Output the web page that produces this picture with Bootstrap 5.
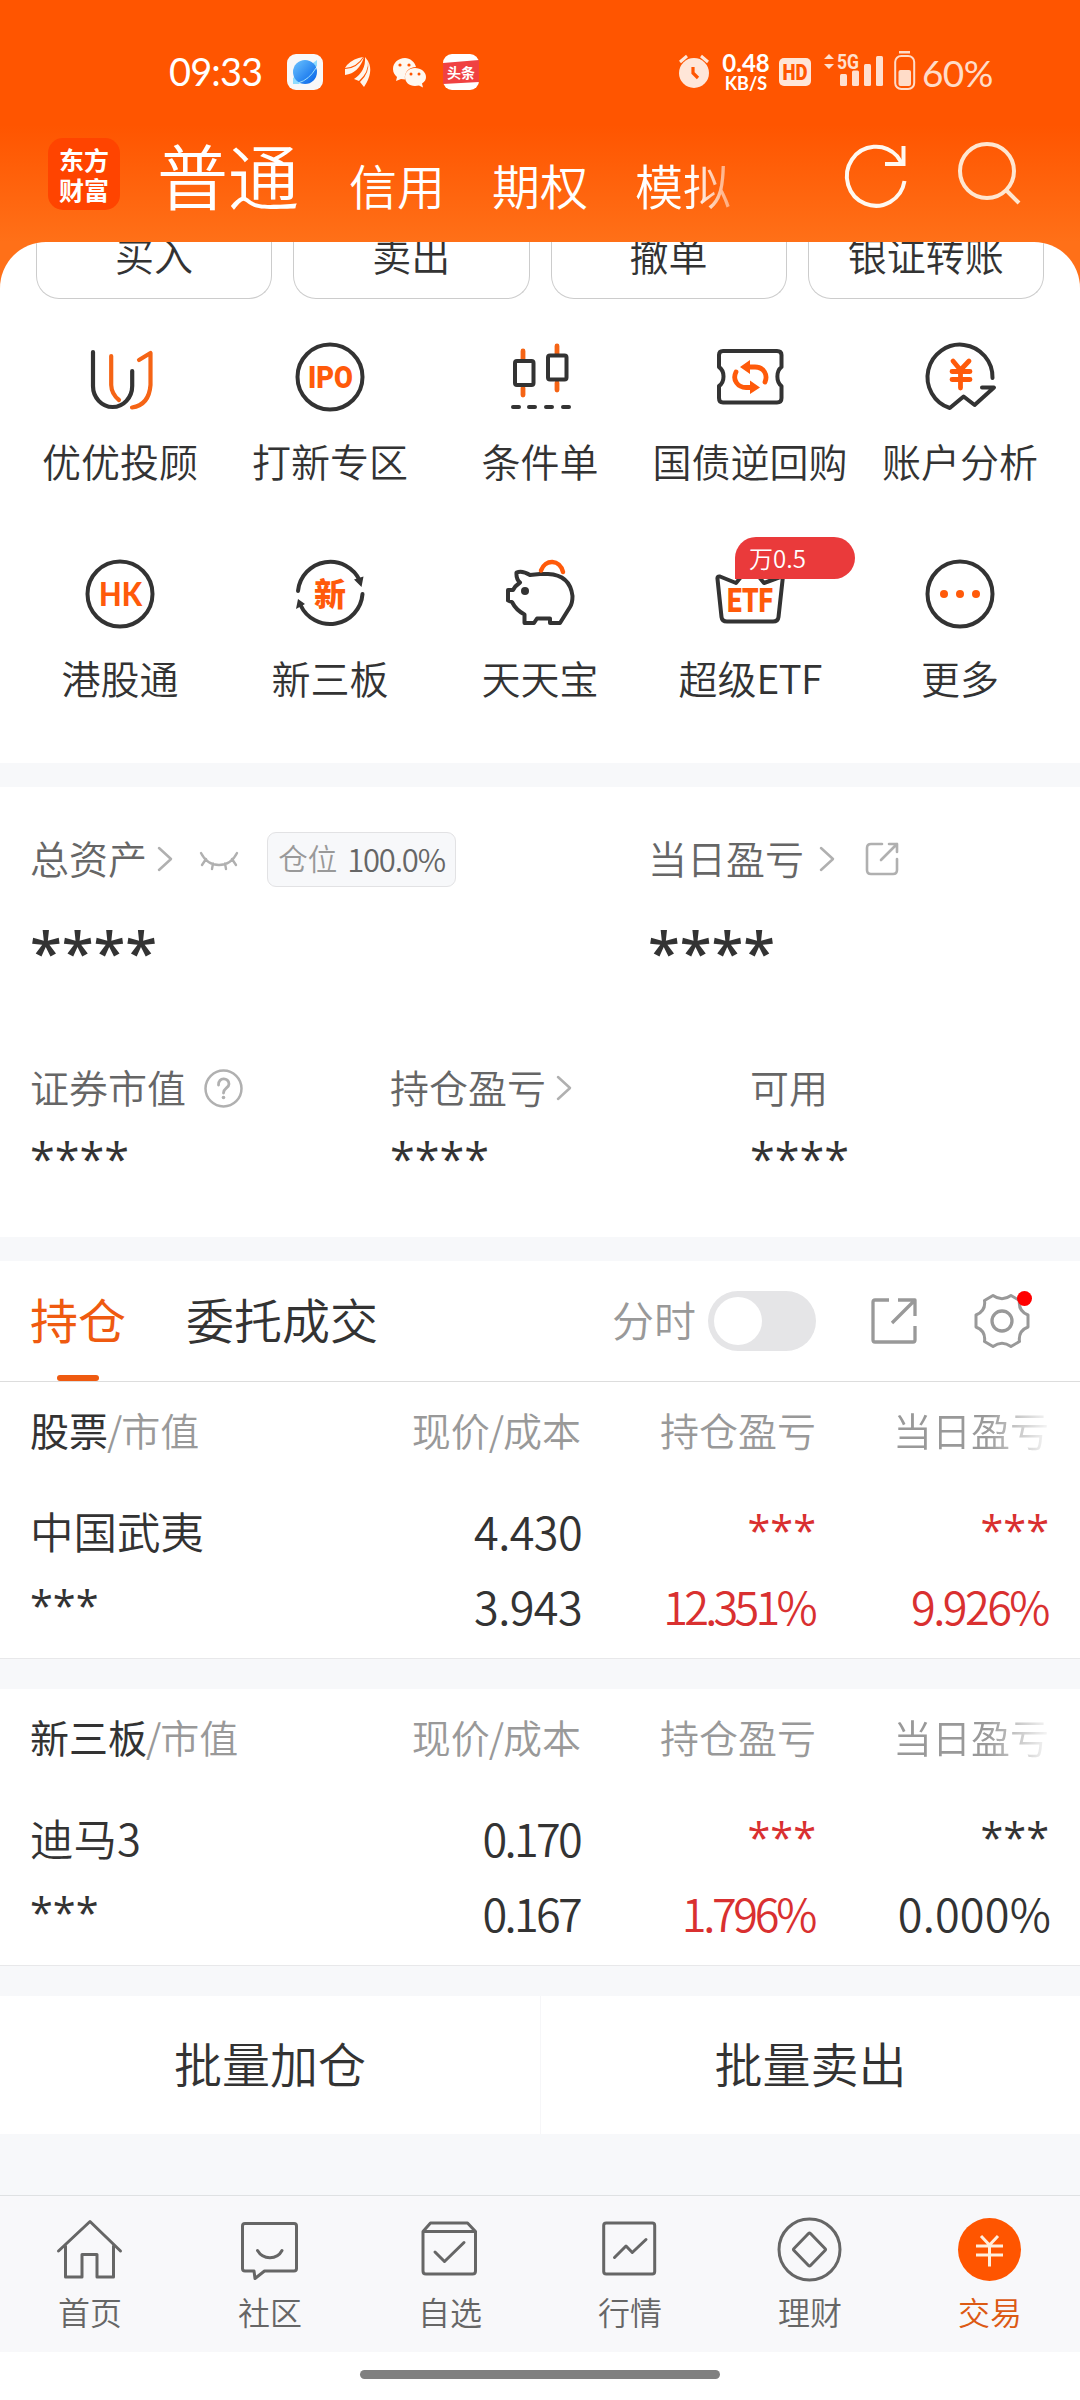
<!DOCTYPE html>
<html lang="zh-CN">
<head>
<meta charset="utf-8">
<meta name="viewport" content="width=device-width, initial-scale=1">
<title>东方财富 交易</title>
<link href="https://cdn.jsdelivr.net/npm/bootstrap@5.3.0/dist/css/bootstrap.min.css" rel="stylesheet">
<style>
:root{--ink:#333;--sub:#666;--mute:#999;--band:#f7f8fa;--brand:#ff5500;--up:#d93030}
body{width:1080px;height:2400px;overflow:hidden;margin:0;background:#fff;color:var(--ink);font-family:Lato,"Noto Sans CJK SC",sans-serif;font-weight:350;font-size:39px;line-height:1;white-space:nowrap}
svg{display:block;flex:none;overflow:visible}
.latin{font-family:"Noto Sans CJK SC",sans-serif;line-height:0}
.ln{fill:none;stroke:currentColor;stroke-linecap:round;stroke-linejoin:round}
.hero{height:242px;color:#fff}
.hero-wrap{background:linear-gradient(#ff5500 0,#ff5500 125px,#ff7018 242px,#ff7018 100%)}
.statusbar{height:94px;padding:50px 0 0 169px;font-family:Lato,sans-serif}
.clock{font-size:38px;font-weight:400;width:118px;line-height:43px;letter-spacing:-.9px}
.speed{width:52px;margin:0 7px 0 10px;text-align:center;font-weight:700}
.titlebar{height:148px;padding:0 0 0 48px}
.logo{width:72px;height:72px;border-radius:15px;background:#ff4400;margin-top:44px;font:700 25px/30px "Noto Sans CJK SC",sans-serif;padding-top:6px}
.t-main{font-size:71px;line-height:70px;margin:48px 0 0 37px;width:192px}
.t-alt{font-size:48px;line-height:48px;margin-top:69px;width:143px}
.fade-title{width:113px;-webkit-mask-image:linear-gradient(90deg,#000 50%,rgba(0,0,0,.35) 90%);mask-image:linear-gradient(90deg,#000 50%,rgba(0,0,0,.35) 90%)}
.panel{border-radius:46px 46px 0 0;height:521px;overflow:hidden}
.quick{gap:21px;padding:0 36px;height:57px}
.quick>div{flex:1;border:1px solid #ccc;border-top:0;border-radius:0 0 23px 23px;line-height:39px;height:57px}
.quick span{display:block;margin-top:-5px}
.apps{padding:36px 15px 0}
.app{width:210px;height:217px}
.app-name{margin-top:27px;line-height:40px}
.app svg{color:#333}
.promo{left:90px;top:-15px;width:120px;height:42px;border-radius:21px 21px 21px 0;background:#ea3a3b;color:#fff;font-family:"Noto Sans CJK SC",sans-serif;font-size:24px;line-height:41px;padding-left:14px}
.band{height:24px;background:var(--band)}
.assets{height:450px;padding:0 30px;color:var(--sub)}
.arow{height:54px}
.pill{width:189px;height:55px;border:1px solid #e2e2e4;border-radius:9px;background:var(--band);font-size:29.500px;margin-left:29px}
.pill-num{margin-left:10px;font-family:"Noto Sans CJK SC",sans-serif;font-size:31px;letter-spacing:-1.2px;margin-bottom:2px}
.stars{font-family:"Open Sans",sans-serif;color:var(--ink);line-height:1}
.s-big{font-size:58px;font-weight:600;height:58px;margin-top:37px}
.s-mid{font-size:45px;font-weight:500;height:46px;margin-top:21px}
.s-sm{font-family:"Open Sans",sans-serif;font-size:41.5px;font-weight:400;padding-bottom:4px}
.gray{color:#b0b0b0}
.tabs{height:121px;border-bottom:1px solid #ddd;padding-left:30px;font-size:48px}
.tab-on{color:#ef5a10;font-weight:400}
.tab-on i{left:27px;bottom:0;width:42px;height:6px;border-radius:3px;background:#ef5a10}
.tab-off{margin-left:60px}
.toggle{width:108px;height:60px;border-radius:30px;background:#e5e5e7;padding:6px}
.toggle i{display:block;width:48px;height:48px;border-radius:50%;background:#fff}
.hold{height:277px;padding:0 31px 0 30px;border-bottom:1px solid #e8e8ea}
.hgrid{display:grid;grid-template-columns:301px 250px 235px 233px;align-items:center;text-align:right}
.hgrid>:first-child{text-align:left}
.hhead{height:101px;color:var(--mute);padding-bottom:3px}
.hhead b{font-weight:400;color:var(--ink)}
.slash{margin:0 -1px}
.num{font-family:"Noto Sans CJK SC",sans-serif;font-size:45px;letter-spacing:-.6px;margin-right:-1px;padding-bottom:5px}
.narrow{letter-spacing:-2.7px;margin-right:1px}
.p1{letter-spacing:-3.7px;margin-right:2px}
.p2{letter-spacing:-2.5px;margin-right:1px}
.p3{letter-spacing:-3.3px;margin-right:2px}
.p0{letter-spacing:.2px;margin-right:-2px}
.up{color:var(--up)}
.fadeout{-webkit-mask-image:linear-gradient(90deg,#000 60%,rgba(0,0,0,.12) 98%);mask-image:linear-gradient(90deg,#000 60%,rgba(0,0,0,.12) 98%)}
.batch{height:138px;font-size:48px}
.batch>div+div{border-left:1px solid #f6f6f8}
.bottomnav{height:157px;background:#f8f8fa;border-top:1px solid #dfe1e3;color:var(--sub);font-size:32px}
.bottomnav>div{width:180px;padding-top:18px}
.bottomnav span{margin-top:9px;line-height:36px}
.homebar{width:360px;height:9px;border-radius:5px;background:#808080;margin:18px auto 0}
</style>
</head>
<body>
<div class="hero-wrap">
<header class="hero">
  <div class="statusbar d-flex align-items-start">
    <span class="clock">09:33</span>
    <svg width="36" height="36" viewBox="0 0 36 36" style="margin-top:4px"><defs><linearGradient id="sea" x1="0" y1="0" x2="1" y2="1"><stop offset="0" stop-color="#6cc4ff"/><stop offset="1" stop-color="#0060e8"/></linearGradient></defs><rect width="36" height="36" rx="9" fill="#f8f8f8"/><path d="M30 6V12L12 30H6V24z" fill="#8edcff"/><circle cx="18" cy="18" r="12" fill="url(#sea)"/><path d="M29 14Q22 26 11 29" stroke="#9be0ff" stroke-width="1" fill="none"/></svg>
    <svg width="26" height="32" viewBox="0 0 26 32" style="margin:6px 0 0 22px" fill="#fff4ea"><path d="M0 12Q12 11 18 1Q9 2 2 9zM0 13V19Q14 17 19 1Q12 13 0 13zM9 23Q21 15 20 1L23 5Q24 16 14 25zM15 26Q25 17 23 5Q29 16 19 31z"/></svg>
    <svg width="33" height="29" viewBox="0 0 33 29" style="margin:8px 0 0 22px" fill="#fff8f0"><path d="M12 0C5 0 0 5 0 11c0 4 2 6 4 8l-1 4 5-2 4 .6C11 14 16 9 23 9 22 4 17 0 12 0z"/><path d="M22 10c-6 0-10 4-10 9s4 9 10 9l4-.6 4 2-1-4c3-2 4-4 4-6.500C33 14 28 10 22 10z"/><g fill="#ff5500"><circle cx="7" cy="7" r="1.600"/><circle cx="16" cy="7" r="1.600"/><circle cx="18" cy="16" r="1.500"/><circle cx="26" cy="16" r="1.500"/></g></svg>
    <svg width="36" height="36" viewBox="0 0 36 36" style="margin:4px 0 0 17px"><rect width="36" height="36" rx="9" fill="#fff"/><path d="M0 9L36 6V28L0 30z" fill="#f04142"/><text x="18" y="24" font-size="14" font-weight="700" font-family="Noto Sans CJK SC" fill="#fff" text-anchor="middle">头条</text></svg>
    <svg width="32" height="36" viewBox="0 0 32 36" style="margin:3px 0 0 199px" fill="#ffe6d8"><circle cx="16" cy="20" r="15"/><path d="M2 9L9 3M23 3L30 9" stroke="#ffe6d8" stroke-width="3"/><path d="M15 14V20L20 25" fill="none" stroke="#ff5500" stroke-width="3.200"/></svg>
    <div class="speed"><div style="font-size:24px;line-height:26px">0.48</div><div style="font-size:18px;line-height:15px">KB/S</div></div>
    <svg width="33" height="28" viewBox="0 0 33 28" style="margin-top:8px"><rect width="32" height="28" rx="5" fill="#ffe6d8"/><text x="3.500" y="22" font-family="Roboto" font-size="22" font-weight="900" fill="#ff5500" textLength="25" lengthAdjust="spacingAndGlyphs">HD</text></svg>
    <svg width="60" height="36" viewBox="0 0 60 36" style="margin:2px 0 0 12px" fill="#ffe0cf"><path d="M0 7L5 2L10 7zM0 12L5 17L10 12z"/><text x="13" y="17" font-size="20" font-weight="700" font-family="Roboto" textLength="22" lengthAdjust="spacingAndGlyphs">5G</text><rect x="16" y="22" width="7" height="12" rx="1.500"/><rect x="28" y="18.500" width="7" height="15.500" rx="1.500"/><rect x="40" y="12" width="7" height="22" rx="1.500"/><rect x="52" y="4" width="7" height="30" rx="1.500"/></svg>
    <svg width="22" height="40" viewBox="0 0 22 40" style="margin:1px 0 0 10px" fill="#ffdcc8"><rect x="5" width="11" height="2.500"/><rect x="1.200" y="5" width="19" height="33" rx="6" fill="none" stroke="#ffdcc8" stroke-width="2"/><rect x="4.500" y="19" width="12.500" height="16" rx="2"/></svg>
    <span style="font-size:37px;line-height:46px;margin-left:6px;font-weight:400;color:#ffdcc8;letter-spacing:-.6px">60%</span>
  </div>
  <div class="titlebar d-flex">
    <div class="logo text-center">东方<br>财富</div>
    <span class="t-main">普通</span><span class="t-alt">信用</span><span class="t-alt">期权</span><span class="t-alt fade-title">模拟</span>
    <svg width="64" height="66" viewBox="843 142 64 66" style="margin:48px 0 0 95px" fill="none" stroke="#fff8f0" stroke-width="4"><path d="M904.500 181A29 29.500 0 1 1 897 156L903 165"/><path d="M903.500 146V164H885"/></svg>
    <svg width="64" height="66" viewBox="957 142 64 66" style="margin:48px 0 0 50px" fill="none" stroke="#ffe6d0" stroke-width="4"><circle cx="987" cy="171" r="27"/><path d="M1006 190L1019 203"/></svg>
  </div>
</header>
<main class="panel bg-white">
  <div class="quick d-flex text-center">
    <div><span>买入</span></div><div><span>卖出</span></div><div><span>撤单</span></div><div><span>银证转账</span></div>
  </div>
  <div class="apps d-flex flex-wrap">
    <div class="app d-flex flex-column align-items-center pt-1">
      <svg width="76" height="76" viewBox="0 0 76 76"><g class="ln" stroke-width="4.200"><path d="M11 13V47a19.600 21 0 0 0 39.200 0V32"/><path stroke="#f56415" d="M29.200 17V46Q29.500 55 37 61M57 21L68.500 14V46Q67 66 50 68.500"/></g></svg>
      <span class="app-name">优优投顾</span></div>
    <div class="app d-flex flex-column align-items-center pt-1">
      <svg width="76" height="76" viewBox="0 0 76 76"><circle class="ln" stroke-width="4" cx="38" cy="38" r="32.500"/><text x="16" y="49" font-family="Roboto" font-size="32" font-weight="900" fill="#ff5a0a" textLength="45" lengthAdjust="spacingAndGlyphs">IPO</text></svg>
      <span class="app-name">打新专区</span></div>
    <div class="app d-flex flex-column align-items-center pt-1">
      <svg width="76" height="76" viewBox="0 0 76 76"><g class="ln" stroke-width="4"><path stroke="#f56415" stroke-width="4.800" d="M21 12V21M21 49V56M55 7V15M55 44V51"/><rect x="13" y="22" width="18.500" height="24" rx="2"/><rect x="46" y="16.500" width="18.500" height="24" rx="2"/><path d="M11 68H17M27 68H33M44 68H50M61 68H67"/></g></svg>
      <span class="app-name">条件单</span></div>
    <div class="app d-flex flex-column align-items-center pt-1">
      <svg width="76" height="76" viewBox="0 0 76 76"><path class="ln" stroke-width="4" d="M11 12H65Q69.500 12 69.500 16V28C64 32 64 43 69.500 47V59Q69.500 63.500 65 63.500H11Q7 63.500 7 59V47C13 43 13 32 7 28V16Q7 12 11 12z"/><g fill="none" stroke="#ff5a0a" stroke-width="4.800" stroke-linecap="round"><path d="M37 28H43C52 28 56 36 53 43M24 33C20 41 26 48.500 34 48.500H39"/></g><path fill="#ff5a0a" d="M28 28L38 21V35zM48 48.500L38 41.500V55z"/></svg>
      <span class="app-name">国债逆回购</span></div>
    <div class="app d-flex flex-column align-items-center pt-1">
      <svg width="76" height="76" viewBox="0 0 76 76"><path class="ln" stroke-width="4" d="M70.500 39A32.500 32.500 0 1 0 27.800 69L41.600 57.500L52.600 66L72 48.500H60"/><path class="ln" style="stroke:#ff5a0a" stroke-width="4.800" d="M31 22L38.500 31L47 22M38.500 31V49M30 32.500H48M30 40.500H48"/></svg>
      <span class="app-name">账户分析</span></div>
    <div class="app d-flex flex-column align-items-center pt-1">
      <svg width="76" height="76" viewBox="0 0 76 76"><circle class="ln" stroke-width="4" cx="38" cy="38" r="32.500"/><text x="17" y="49.500" font-family="Lato" font-size="32" font-weight="900" fill="#ff5a0a" textLength="43" lengthAdjust="spacingAndGlyphs">HK</text></svg>
      <span class="app-name">港股通</span></div>
    <div class="app d-flex flex-column align-items-center pt-1">
      <svg width="76" height="76" viewBox="0 0 76 76"><path class="ln" stroke-width="4" d="M6 35A32.500 32.500 0 0 1 68 25M70.500 38A32.500 32.500 0 0 1 8.500 49"/><path fill="#333" d="M62 23.500L71.500 20.500L69.500 31zM4 53L6 43L13 48z"/><text x="38" y="49.500" text-anchor="middle" font-family="Noto Sans CJK SC" font-size="32" font-weight="900" fill="#ff5a0a">新</text></svg>
      <span class="app-name">新三板</span></div>
    <div class="app d-flex flex-column align-items-center pt-1">
      <svg width="76" height="76" viewBox="0 0 76 76"><path class="ln" stroke-width="4" d="M6 34L6 44.500L10 46Q14 54 22.500 58.500V67H32L35 62.500H48V67H58L68 51Q70.500 47 70.500 40Q68 19 46 18H38L28 19Q20 14 14.500 16.500Q14 23 18 26.500Q13 30 11 34z"/><path class="ln" style="stroke:#ff5a0a" stroke-width="4.500" d="M39 14.500C43 3 58 3 61 16"/><circle cx="23" cy="35" r="4" fill="#333"/></svg>
      <span class="app-name">天天宝</span></div>
    <div class="app d-flex flex-column align-items-center pt-1 position-relative">
      <svg width="76" height="76" viewBox="0 0 76 76"><path class="ln" stroke-width="4" d="M24 27L8 20.500Q5 20 5.500 23L9.500 61Q10 65.500 15 65.500H61Q66 65.500 66.500 61L71 20L52 27L38 10z"/><text x="15" y="55.500" font-family="Roboto" font-size="33" font-weight="900" fill="#ff5a0a" textLength="46" lengthAdjust="spacingAndGlyphs">ETF</text></svg>
      <span class="app-name">超级<span class="latin" style="letter-spacing:-.8px">ETF</span></span><span class="promo position-absolute">万0.5</span></div>
    <div class="app d-flex flex-column align-items-center pt-1">
      <svg width="76" height="76" viewBox="0 0 76 76"><circle class="ln" stroke-width="4" cx="38" cy="38" r="32.500"/><g fill="#ff5a0a"><circle cx="22" cy="38" r="4"/><circle cx="38" cy="38" r="4"/><circle cx="54" cy="38" r="4"/></g></svg>
      <span class="app-name">更多</span></div>
  </div>
</main>
</div>
<div class="band"></div>
<section class="assets">
  <div class="d-flex" style="padding-top:45px">
    <div style="width:618px">
      <div class="arow d-flex align-items-center">总资产
        <svg class="gray" width="14" height="24" viewBox="0 0 14 24" style="margin-left:11px"><path class="ln" stroke-width="2.500" d="M1 1L13 12L1 23"/></svg>
        <svg class="gray" width="38" height="18" viewBox="0 0 38 18" style="margin:4px 0 0 28px"><path class="ln" stroke-width="2.400" d="M1 1C9 17 29 17 37 1M6 7L2 13M13 11.500L12 17M25 11.500L26 17M32 7L36 13"/></svg>
        <div class="pill d-flex align-items-center justify-content-center"><span style="color:#999">仓位</span><span class="pill-num">100.0%</span></div>
      </div>
      <div class="stars s-big">****</div>
    </div>
    <div>
      <div class="arow d-flex align-items-center">当日盈亏
        <svg class="gray" width="14" height="24" viewBox="0 0 14 24" style="margin-left:16px"><path class="ln" stroke-width="2.500" d="M1 1L13 12L1 23"/></svg>
        <svg class="gray" width="34" height="34" viewBox="0 0 34 34" style="margin-left:31px"><path class="ln" stroke-width="2.600" d="M17 2H6Q2 2 2 6V28Q2 32 6 32H28Q32 32 32 28V17M24 2H32V10M32 2L16 18"/></svg>
      </div>
      <div class="stars s-big">****</div>
    </div>
  </div>
  <div class="d-flex" style="margin-top:80px">
    <div style="width:360px"><div class="arow d-flex align-items-center">证券市值
        <svg class="gray" width="39" height="39" viewBox="0 0 39 39" style="margin-left:18px"><circle class="ln" stroke-width="2.500" cx="19.500" cy="19.500" r="18"/><path class="ln" stroke-width="2.800" d="M14.500 16C14 8 25 8 25 15C25 19 19.500 19 19.500 24"/><circle cx="19.500" cy="28.500" r="1.800" fill="currentColor"/></svg></div>
      <div class="stars s-mid">****</div></div>
    <div style="width:360px"><div class="arow d-flex align-items-center">持仓盈亏
        <svg class="gray" width="14" height="24" viewBox="0 0 14 24" style="margin-left:11px"><path class="ln" stroke-width="2.500" d="M1 1L13 12L1 23"/></svg></div>
      <div class="stars s-mid">****</div></div>
    <div><div class="arow d-flex align-items-center">可用</div>
      <div class="stars s-mid">****</div></div>
  </div>
</section>
<div class="band"></div>
<div class="tabs d-flex align-items-center">
  <div class="tab-on position-relative d-flex align-items-center h-100">持仓<i class="position-absolute"></i></div>
  <div class="tab-off">委托成交</div>
  <div class="ms-auto d-flex align-items-center" style="color:#999;font-size:42px;padding-right:50px">
    <span style="margin-right:12px">分时</span>
    <div class="toggle"><i></i></div>
    <svg width="46" height="46" viewBox="0 0 46 46" style="margin-left:55px"><path class="ln" stroke-width="3.300" style="stroke-linecap:butt" d="M18 2H4Q2 2 2 4V42Q2 44 4 44H42Q44 44 44 42V28M27 2H44V18M44 2L21 25"/></svg>
    <svg width="56" height="56" viewBox="-28 -28 56 56" style="margin-left:57px"><path class="ln" stroke-width="3" d="M-9 -25.500Q0 -19 9 -25.500L17.500 -20.500Q16 -10 26 -6V6Q16 10 17.500 20.500L9 25.500Q0 19 -9 25.500L-17.500 20.500Q-16 10 -26 6V-6Q-16 -10 -17.500 -20.500z"/><circle class="ln" stroke-width="3.300" r="10"/><circle cx="22.500" cy="-22.500" r="7.500" fill="#f00"/></svg>
  </div>
</div>
<section class="hold">
  <div class="hgrid hhead"><span><b>股票</b><span class="slash latin">/</span>市值</span><span>现价<span class="slash latin">/</span>成本</span><span>持仓盈亏</span><span><span class="fadeout d-inline-block">当日盈亏</span></span></div>
  <div class="hgrid" style="height:100px"><span style="font-size:43.500px">中国武夷</span><span class="num">4.430</span><span class="s-sm up">***</span><span class="s-sm up">***</span></div>
  <div class="hgrid" style="height:45px"><span class="s-sm">***</span><span class="num">3.943</span><span class="num p1 up">12.351%</span><span class="num p2 up">9.926%</span></div>
</section>
<div class="band" style="height:30px"></div>
<section class="hold">
  <div class="hgrid hhead"><span><b>新三板</b><span class="slash latin">/</span>市值</span><span>现价<span class="slash latin">/</span>成本</span><span>持仓盈亏</span><span><span class="fadeout d-inline-block">当日盈亏</span></span></div>
  <div class="hgrid" style="height:100px"><span style="font-size:43.500px">迪马<span class="latin">3</span></span><span class="num narrow">0.170</span><span class="s-sm up">***</span><span class="s-sm">***</span></div>
  <div class="hgrid" style="height:45px"><span class="s-sm">***</span><span class="num narrow">0.167</span><span class="num p3 up">1.796%</span><span class="num p0">0.000%</span></div>
</section>
<div class="band" style="height:30px"></div>
<div class="batch d-flex text-center">
  <div class="w-50 d-flex align-items-center justify-content-center">批量加仓</div>
  <div class="w-50 d-flex align-items-center justify-content-center">批量卖出</div>
</div>
<div class="band" style="height:61px"></div>
<nav class="bottomnav d-flex">
  <div class="d-flex flex-column align-items-center"><svg width="72" height="72" viewBox="0 0 72 72"><path class="ln" stroke-width="3" d="M4.500 37L36 7.500L66.500 37M11.500 32V63H28V40.500H43V63H59.500V32"/></svg><span>首页</span></div>
  <div class="d-flex flex-column align-items-center"><svg width="72" height="72" viewBox="0 0 72 72"><path class="ln" stroke-width="3" d="M11 9.500H60Q62.500 9.500 62.500 12V54.500Q62.500 57 60 57H30.500L21 64.500L20 57H11Q8.500 57 8.500 54.500V12Q8.500 9.500 11 9.500zM23.500 36.500C29 46 43 46 48 36.500"/></svg><span>社区</span></div>
  <div class="d-flex flex-column align-items-center"><svg width="72" height="72" viewBox="0 0 72 72"><path class="ln" stroke-width="3" d="M9 17.500L16.500 9H53.500L61.500 17.500V57Q61.500 60 58.500 60H12Q9 60 9 57zM9 17.500H61.500M21 38L30.500 47.500L50 28.500"/></svg><span>自选</span></div>
  <div class="d-flex flex-column align-items-center"><svg width="72" height="72" viewBox="0 0 72 72"><g class="ln" stroke-width="3"><rect x="9.700" y="9" width="51" height="51" rx="2.500"/><path d="M20.500 43.500L32 32L38.300 38.500L52 25.500"/></g></svg><span>行情</span></div>
  <div class="d-flex flex-column align-items-center"><svg width="72" height="72" viewBox="0 0 72 72"><g class="ln" stroke-width="3"><circle cx="35.500" cy="35.500" r="30.500"/><path d="M34.500 19.500Q35.500 18.500 36.500 19.500L51 34.500Q52 35.500 51 36.500L36.500 51.500Q35.500 52.500 34.500 51.500L20 36.500Q19 35.500 20 34.500z"/></g></svg><span>理财</span></div>
  <div class="d-flex flex-column align-items-center" style="color:#dc5a14"><svg width="72" height="72" viewBox="0 0 72 72"><circle cx="35.500" cy="35.500" r="31.500" fill="#ff5500"/><path fill="none" stroke="#ffeedd" stroke-width="3" d="M27 22L35.500 31L44 22M35.500 31V52.500M22 32H49M22 41H49"/></svg><span>交易</span></div>
</nav>
<div class="homebar"></div>
<script src="https://cdn.jsdelivr.net/npm/bootstrap@5.3.0/dist/js/bootstrap.bundle.min.js"></script>
</body>
</html>
